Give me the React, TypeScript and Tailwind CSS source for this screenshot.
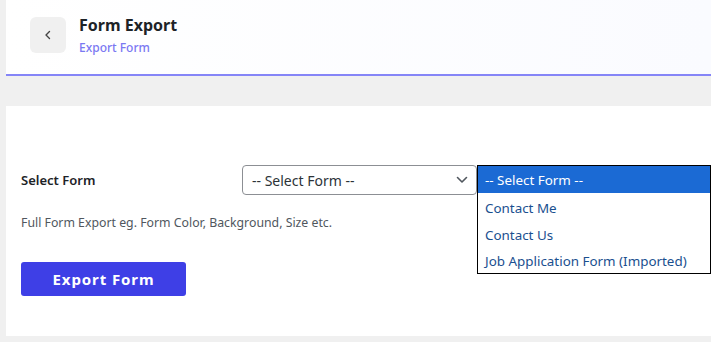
import React from "react";

export default function App() {
  const font = { fontFamily: '"Noto Sans", "Open Sans", sans-serif' };
  return (
    <div className="w-[711px] h-[342px] bg-[#f0f0f0] pl-[6px] overflow-hidden" style={font}>
      <div className="h-[76px] bg-gradient-to-r from-white to-[#fafbff] border-b-2 border-[#8585f7] flex items-start pl-[24px] pt-[17px]">
        <button className="w-[36px] h-[36px] rounded-md bg-[#f0f0f0] flex items-center justify-center">
          <svg width="10" height="10" viewBox="0 0 10 10" fill="none">
            <path d="M6.5 1.5 L3 5 L6.5 8.5" stroke="#444" strokeWidth="1.4" strokeLinecap="round" strokeLinejoin="round" />
          </svg>
        </button>
        <div className="ml-[13px] flex flex-col">
          <div className="text-[16px] font-bold text-[#1d2327] leading-[20px] mt-[-2px]">Form Export</div>
          <div className="text-[12px] font-medium text-[#7a78f2] leading-[16px] mt-[5px]">Export Form</div>
        </div>
      </div>
      <div className="mt-[30px] h-[230px] bg-white pl-[15px] pt-[59px] relative">
        <div className="flex items-center h-[30px]">
          <div className="w-[221px] text-[13px] font-semibold text-[#1d2327] pt-[1px]">Select Form</div>
          <div className="w-[235px] h-[30px] border border-[#8c8f94] rounded-[4px] flex items-center justify-between pl-[9px] pr-[8px] text-[14px] text-[#2c3338]">
            <span>-- Select Form --</span>
            <svg width="12" height="8" viewBox="0 0 12 8" fill="none">
              <path d="M1.5 1.5 L6 6 L10.5 1.5" stroke="#50575e" strokeWidth="1.6" strokeLinecap="round" strokeLinejoin="round" />
            </svg>
          </div>
        </div>
        <div className="mt-[19px] text-[12.3px] text-[#50575e]">Full Form Export eg. Form Color, Background, Size etc.</div>
        <button className="mt-[30px] w-[165px] h-[34px] bg-[#3e3fe6] rounded-[3px] text-white text-[15px] font-bold tracking-[0.06em]">
          Export Form
        </button>
        <div className="absolute left-[471px] top-[59px] w-[234px] border border-black bg-white text-[13.4px]">
          <div className="h-[27px] bg-[#1b6ad4] text-white flex items-center pl-[7px] pt-[2px]">-- Select Form --</div>
          <div className="h-[27px] text-[#1a4f8f] flex items-center pl-[7px] pt-[3px]">Contact Me</div>
          <div className="h-[27px] text-[#1a4f8f] flex items-center pl-[7px] pt-[3px]">Contact Us</div>
          <div className="h-[26px] text-[#1a4f8f] flex items-center pl-[7px] pt-[3px]">Job Application Form (Imported)</div>
        </div>
      </div>
    </div>
  );
}
